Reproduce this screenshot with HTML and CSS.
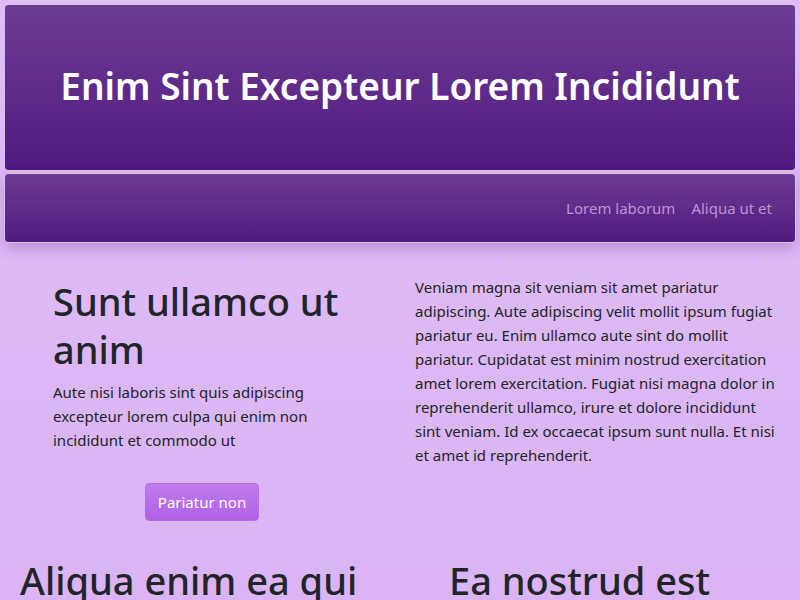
FILE: index.html
```html
<!DOCTYPE html>
<html>
<head>
<meta charset="utf-8">
<link rel="stylesheet" href="styles.css">
</head>
<body>
<header class="hero">
  <h1 class="hero-title">Enim Sint Excepteur Lorem Incididunt</h1>
</header>
<nav class="navbar">
  <a class="nav-link" href="#">Lorem laborum</a>
  <a class="nav-link" href="#">Aliqua ut et</a>
</nav>
<main class="content">
  <section class="col col-left">
    <h2 class="lead-title">Sunt ullamco ut anim</h2>
    <p class="lead-text">Aute nisi laboris sint quis adipiscing excepteur lorem culpa qui enim non incididunt et commodo ut</p>
    <div class="btn-row"><button class="btn">Pariatur non</button></div>
  </section>
  <section class="col col-right">
    <p class="body-text">Veniam magna sit veniam sit amet pariatur adipiscing. Aute adipiscing velit mollit ipsum fugiat pariatur eu. Enim ullamco aute sint do mollit pariatur. Cupidatat est minim nostrud exercitation amet lorem exercitation. Fugiat nisi magna dolor in reprehenderit ullamco, irure et dolore incididunt sint veniam. Id ex occaecat ipsum sunt nulla. Et nisi et amet id reprehenderit.</p>
  </section>
</main>
<section class="features">
  <h2 class="feature-title ft-left">Aliqua enim ea qui</h2>
  <h2 class="feature-title ft-right">Ea nostrud est</h2>
</section>
</body>
</html>
```
FILE: styles.css
```css
* { box-sizing: border-box; }
html, body { margin: 0; padding: 0; }
body {
  font-family: "Noto Sans", "Open Sans", sans-serif;
  background: linear-gradient(#dfbdf7, #dab4f4) fixed;
  min-height: 600px;
  color: #212529;
  overflow: hidden;
}
.hero {
  margin: 4px 4px 0;
  height: 167px;
  border: 1px solid #d6c6e3;
  border-radius: 4px;
  background: linear-gradient(#6e3c94, #511a80);
  display: flex;
  align-items: center;
  justify-content: center;
}
.hero-title {
  margin: 0 0 4px;
  color: #fff;
  font-size: 37px;
  font-weight: 600;
}
.navbar {
  margin: 2px 4px 0;
  height: 70px;
  border: 1px solid #d6c6e3;
  border-radius: 4px;
  background: linear-gradient(#6e3c94, #511a80);
  display: flex;
  align-items: center;
  justify-content: flex-end;
  gap: 16px;
  padding-right: 23px;
  box-shadow: 0 6px 14px rgba(80, 30, 110, 0.25);
}
.nav-link {
  color: #b994d4;
  text-decoration: none;
  font-size: 15px;
}
.content {
  display: grid;
  grid-template-columns: 400px 400px;
}
.col-left { padding: 34px 49px 0 53px; }
.col-right { padding: 32px 25px 0 15px; }
.lead-title {
  margin: 0;
  font-size: 38px;
  font-weight: 500;
  line-height: 48px;
}
.lead-text {
  margin: 7px 0 0;
  font-size: 15px;
  line-height: 24px;
}
.btn-row { display: flex; justify-content: center; margin-top: 31px; }
.btn {
  font-family: inherit;
  font-size: 15px;
  color: #fff;
  background: linear-gradient(#bf7bec, #b062e6);
  border: 1px solid #b96ee8;
  border-radius: 4px;
  padding: 7px 12px;
  height: 38px;
}
.body-text {
  margin: 0;
  font-size: 15px;
  line-height: 24px;
}
.features {
  display: grid;
  grid-template-columns: 400px 400px;
  margin-top: 35px;
}
.feature-title {
  margin: 0;
  font-size: 38px;
  font-weight: 500;
  line-height: 48px;
}
.ft-left { padding-left: 20px; }
.ft-right { padding-left: 49px; }
```
